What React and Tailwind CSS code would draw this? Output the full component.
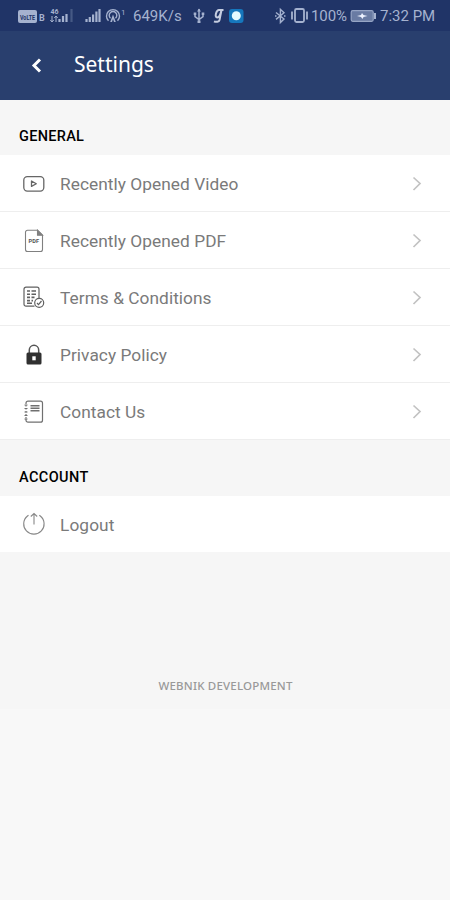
import React from 'react';

function StatusBar() {
  return (
    <div className="flex h-[31px] items-center bg-[#203467] pl-[17px] font-[Roboto,sans-serif] text-[15px] leading-none text-[#a5b2cf]">
      <svg className="h-[31px] w-[112px] shrink-0" viewBox="17 0 112 31" fill="none">
        <rect x="18" y="10" width="19" height="13" rx="2" fill="#a5b2cf" />
        <text x="20" y="19.5" fontSize="7" fontWeight="700" fontFamily="Roboto" textLength="15" lengthAdjust="spacingAndGlyphs" fill="#203467">VoLTE</text>
        <text x="39" y="20.500" fontSize="9" fontWeight="700" fontFamily="Roboto" fill="#a5b2cf">B</text>
        <text x="50.5" y="14" fontSize="7" fontWeight="700" fontFamily="Roboto" fill="#a5b2cf">46</text>
        <path d="M52 16v6M50.300 20l1.700 2 1.700-2M56 22v-6M54.300 18l1.700-2 1.700 2" stroke="#a5b2cf" strokeWidth="1" />
        <path d="M59.500 22v-3M63 22v-6M66.500 22v-8" stroke="#a5b2cf" strokeWidth="2.200" />
        <path d="M71.500 22V9" stroke="#465985" strokeWidth="2.200" />
        <path d="M86.500 22v-3M89.800 22v-5M93.100 22v-7.500M96.400 22V11.500M99.500 22V9" stroke="#a5b2cf" strokeWidth="2.200" />
        <path d="M108.500 20.800a6.500 6.500 0 1 1 9 0M110.500 18.200a3.800 3.800 0 1 1 5 0" stroke="#a5b2cf" strokeWidth="1.400" />
        <path d="M113 14.500l2.800 7.500h-1.800l-1-3-1 3h-1.800z" fill="#a5b2cf" />
        <text x="121" y="14.500" fontSize="8" fontFamily="Roboto" fill="#a5b2cf">1</text>
      </svg>
      <span className="w-[60px] shrink-0 whitespace-nowrap pl-[4px] pt-[2px]">649K/s</span>
      <svg className="h-[31px] w-[121px] shrink-0" viewBox="189 0 121 31" fill="none">
        <path d="M199 9v13M195 14v2.500l4 3 4-3V14" stroke="#a5b2cf" strokeWidth="1.500" />
        <path d="M199 8.500l2 3h-4zM193.700 12.500h2.600v2.600h-2.600zM201.700 12.500h2.600v2.600h-2.600zM197.500 20.500h3v2.500h-3z" fill="#a5b2cf" />
        <path d="M221.500 10h-2.500c-2.800 0-4.800 7.500-1.800 7.500 1.800 0 3.200-2.500 4.300-7.500zm0 0h2M221.500 10l-2 10c-.5 2-3.500 2.300-5.500 1.300" stroke="#c5cde0" strokeWidth="2" />
        <rect x="229" y="9" width="14.500" height="14" rx="3" fill="#1677bd" />
        <circle cx="236.300" cy="15.700" r="4.500" fill="#e5faff" />
        <path d="M276 12.500l8 6.500-3.600 3.600V9.300l3.600 3.500-8 6.600M275 16h1.500M284 16h1.500" stroke="#a5b2cf" strokeWidth="1.400" />
        <rect x="295" y="9" width="9" height="13" rx="1.500" stroke="#a5b2cf" strokeWidth="1.800" />
        <path d="M292 11.500v8M307 11.500v8" stroke="#a5b2cf" strokeWidth="1.800" />
      </svg>
      <span className="w-[39px] shrink-0 whitespace-nowrap pl-[1px] pt-[2px] tracking-[-0.1px]">100%</span>
      <svg className="h-[31px] w-[30px] shrink-0" viewBox="349 0 30 31" fill="none">
        <rect x="351.200" y="10.700" width="22" height="10.600" rx="1.500" fill="#697ba3" stroke="#96a5c5" strokeWidth="1.200" />
        <path d="M375 13v6" stroke="#a5b2cf" strokeWidth="2" />
        <path d="M357 16l4-1 1-2 1.500 2 4 1-4 1-1 2-1.500-2z" fill="#edf2ff" />
      </svg>
      <span className="whitespace-nowrap pl-[1px] pt-[2px]">7:32 PM</span>
    </div>
  );
}

function VideoIcon() {
  return (
    <svg viewBox="0 0 24 24" className="h-6 w-6" fill="none" stroke="#666" strokeWidth="1.300">
      <rect x="1.800" y="4.600" width="20" height="14.500" rx="3.500" />
      <path d="M9.500 9v5.400l4.800-2.700z" strokeLinejoin="round" />
    </svg>
  );
}

function PdfIcon() {
  return (
    <svg viewBox="0 0 24 24" className="h-6 w-6" fill="none" stroke="#808080" strokeWidth="1.100">
      <path d="M15.500 1.200h-10A2 2 0 0 0 3.500 3.200v17.300a2 2 0 0 0 2 2h13a2 2 0 0 0 2-2V6.200z" />
      <path d="M15.500 1.200v5h5z" fill="#808080" />
      <text x="6.600" y="13.500" fontSize="5" fontWeight="700" fontFamily="Roboto" textLength="10.500" lengthAdjust="spacingAndGlyphs" fill="#555" stroke="none">PDF</text>
    </svg>
  );
}

function TermsIcon() {
  return (
    <svg viewBox="0 0 24 24" className="h-6 w-6" fill="none" stroke="#606060" strokeWidth="1.200">
      <path d="M12.500 20.200H4a2 2 0 0 1-2-2V3.200a2 2 0 0 1 2-2h11a2 2 0 0 1 2 2V12" />
      <path d="M5 5h3M9.500 5H14M5 8.200h3M9.500 8.200H14M5 11.400h3M9.500 11.400h3M5 14.600h3M9.500 14.600H11M5 17.200h5" strokeWidth="1.600" />
      <circle cx="17.200" cy="16.800" r="4.500" />
      <path d="M15 17l1.500 1.600 3-3.600" />
    </svg>
  );
}

function LockIcon() {
  return (
    <svg viewBox="0 0 24 24" className="h-6 w-6" fill="none">
      <path d="M7.300 11V7a4.700 4.700 0 0 1 9.400 0v4" stroke="#555" strokeWidth="1.500" />
      <rect x="4.500" y="9.500" width="15" height="12" rx="1.500" fill="#303030" />
      <rect x="10.300" y="13.300" width="3.400" height="4" fill="#fff" />
    </svg>
  );
}

function ContactIcon() {
  return (
    <svg viewBox="0 0 24 24" className="h-6 w-6" fill="none" stroke="#707070" strokeWidth="1.200">
      <path d="M4 4V3.200a2 2 0 0 1 2-2h12.500a2 2 0 0 1 2 2v17a2 2 0 0 1-2 2H6a2 2 0 0 1-2-2V19" />
      <path d="M4 5v14" strokeDasharray="1.500 1.500" />
      <path d="M2.500 5h3M2.500 8.500h3M2.500 12h3M2.500 15.500h3M2.500 19h3" strokeWidth="1" />
      <path d="M8.500 5.700h9M8.500 8.200h9M8.500 10.700h9" strokeWidth="1.600" />
    </svg>
  );
}

function LogoutIcon() {
  return (
    <svg viewBox="0 0 24 24" className="h-6 w-6" fill="none" stroke="#888" strokeWidth="1.100">
      <path d="M6.500 3.200l-1 .8A10.200 10.200 0 1 0 18.300 4l-1-.8" />
      <path d="M12 12.500V2M8.800 4.500L12 1.500l3.200 3" />
    </svg>
  );
}

const rows = [
  { label: 'Recently Opened Video', icon: VideoIcon },
  { label: 'Recently Opened PDF', icon: PdfIcon },
  { label: 'Terms & Conditions', icon: TermsIcon },
  { label: 'Privacy Policy', icon: LockIcon },
  { label: 'Contact Us', icon: ContactIcon },
];

export default function App() {
  return (
    <div className="flex h-[900px] w-[450px] flex-col overflow-hidden bg-[#f8f8f8] font-[Roboto,sans-serif]">
      <StatusBar />
      <header className="flex h-[69px] items-center bg-[#293f6e] pb-[1px] text-white">
        <svg className="ml-[30px] h-4 w-3" viewBox="0 0 12 16" fill="none" stroke="#fff" strokeWidth="3">
          <path d="M10 2.500L4 8.500l6 6" />
        </svg>
        <h1 className="ml-8 pb-[2px] font-['Noto_Sans',sans-serif] text-[21px] font-normal leading-none">Settings</h1>
      </header>
      <main className="h-[609px] bg-[#f6f6f6]">
        <h2 className="h-[55px] pl-[19px] pt-[27px] text-[14.5px] font-medium leading-[20px] tracking-[0.3px] text-black">GENERAL</h2>
        <div className="h-[285px] bg-white">
          {rows.map(({ label, icon: Icon }) => (
            <div key={label} className="flex h-[57px] items-center border-b border-[#eee] pl-[22px] pr-[28px] pt-[1px]">
              <Icon />
              <span className="ml-[14px] pt-[1px] text-[17.3px] leading-5 tracking-[0.05px] text-[#7a7a7a]">{label}</span>
              <svg className="ml-auto h-4 w-[10px]" viewBox="0 0 10 16" fill="none" stroke="#c2c2c2" strokeWidth="1.700">
                <path d="M1.500 1.500L8 7.500l-6.500 6.500" />
              </svg>
            </div>
          ))}
        </div>
        <h2 className="h-[56px] pl-[19px] pt-[28px] text-[14.5px] font-medium leading-[20px] tracking-[0.4px] text-black">ACCOUNT</h2>
        <div className="flex h-[56px] items-center bg-white pl-[22px]">
          <LogoutIcon />
          <span className="ml-[14px] pt-[2px] text-[17.3px] leading-5 tracking-[0.1px] text-[#7a7a7a]">Logout</span>
        </div>
        <p className="pl-[1px] pt-[124px] text-center font-['Noto_Sans',sans-serif] text-[11.5px] font-medium leading-5 tracking-[0.2px] text-[#999]">WEBNIK DEVELOPMENT</p>
      </main>
    </div>
  );
}
